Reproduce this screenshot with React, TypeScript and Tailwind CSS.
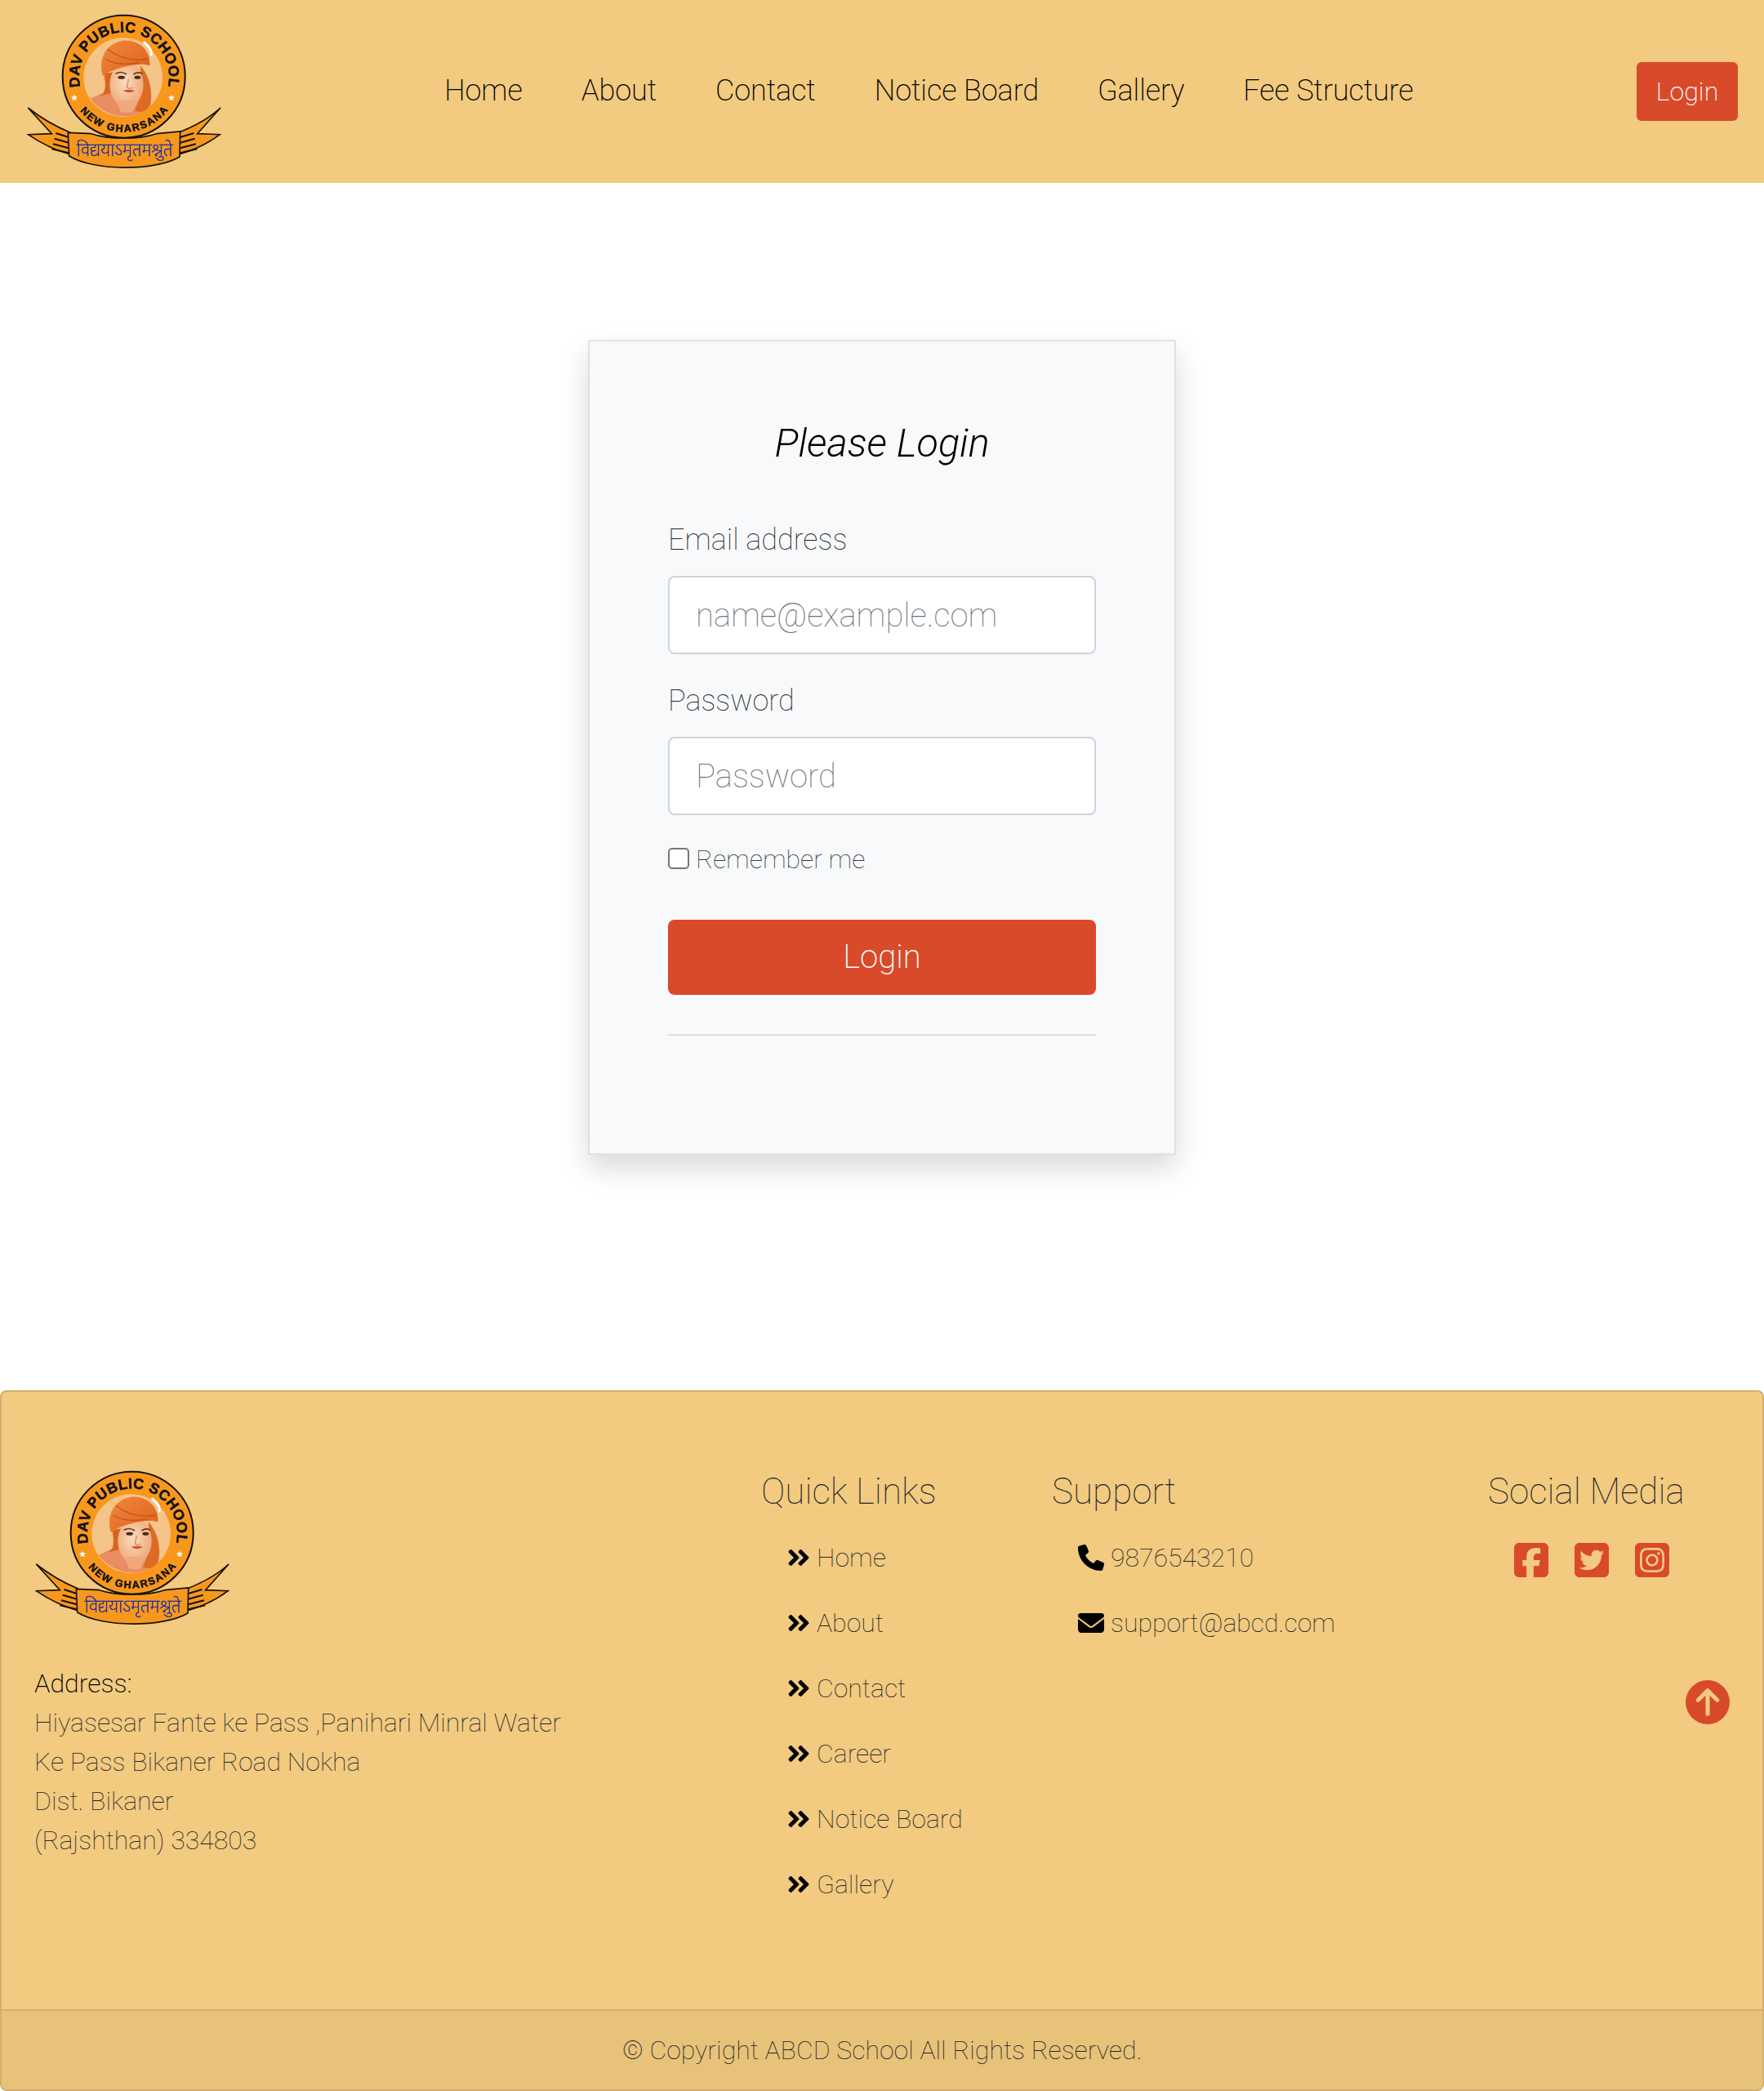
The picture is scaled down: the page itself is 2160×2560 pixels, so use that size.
import React from "react"
import { FaAngleDoubleRight } from "react-icons/fa"
import {
  FaCircleArrowUp,
  FaEnvelope,
  FaPhone,
  FaSquareFacebook,
  FaSquareInstagram,
  FaSquareTwitter,
} from "react-icons/fa6"

const navLinks = ["Home", "About", "Contact", "Notice Board", "Gallery", "Fee Structure"]
const quickLinks = ["Home", "About", "Contact", "Career", "Notice Board", "Gallery"]

const Logo = ({ id }: { id: string }) => (
  <svg viewBox="99 50 714 570" className="h-[190px] w-[238px] shrink-0 blur-[0.4px]">
    <defs>
      <path id={`${id}-top`} d="M295 318 A165 165 0 1 1 617 318" />
      <path id={`${id}-bottom`} d="M290 400 A204 204 0 0 0 620 400" />
      <linearGradient id={`${id}-turban`} x1="0" y1="0" x2="1" y2="1">
        <stop offset="0" stopColor="#f08a3c" />
        <stop offset="1" stopColor="#dd5f1c" />
      </linearGradient>
      <radialGradient id={`${id}-skin`} cx="0.45" cy="0.45" r="0.6">
        <stop offset="0" stopColor="#fbdcbc" />
        <stop offset="1" stopColor="#eda679" />
      </radialGradient>
    </defs>
    <g stroke="#161208" strokeWidth="5" fill="#f7981d">
      <path d="M103 395 C150 432 200 462 255 484 L255 565 C200 550 150 525 103 493 L190 490 Z" />
      <path d="M810 395 C770 432 715 462 660 484 L660 565 C715 550 765 525 808 493 L725 490 Z" />
      <circle cx="455" cy="280" r="225" strokeWidth="6" />
      <path d="M205 488 L252 503 M200 508 L252 523 M195 528 L252 543 M190 546 L252 561" fill="none" strokeWidth="6" />
      <path d="M662 503 L712 488 M662 523 L716 508 M662 543 L720 528 M662 561 L724 546" fill="none" strokeWidth="6" />
      <path d="M250 486 L335 490 C400 512 510 512 575 490 L662 482 L660 575 C570 628 345 628 254 572 Z" />
    </g>
    <circle cx="452" cy="283" r="145" fill="#f4c488" />
    <path d="M332 362 C365 345 392 335 410 322 L520 370 L552 382 C530 412 490 428 450 426 C405 424 362 400 332 362 Z" fill="#ea8d62" />
    <path d="M515 240 C552 280 562 340 552 385 C535 410 515 415 495 405 C520 360 520 300 515 240 Z" fill="#dd6a25" />
    <path d="M382 270 C392 325 385 345 365 352 L410 340 L425 262 Z" fill="#d9641f" />
    <ellipse cx="465" cy="310" rx="62" ry="82" fill={`url(#${id}-skin)`} />
    <path d="M425 368 L508 368 L485 412 L445 412 Z" fill="#f0a97c" />
    <path d="M378 278 C360 220 385 160 450 148 C505 142 555 180 550 240 C525 228 470 240 430 252 C405 262 392 268 378 278 Z" fill={`url(#${id}-turban)`} />
    <path d="M395 180 C440 215 490 225 545 215 M385 215 C430 240 470 235 510 230" stroke="#c9541a" strokeWidth="4" fill="none" />
    <path d="M425 270 Q445 258 465 272 M490 272 Q508 260 524 270" stroke="#6b3a1c" strokeWidth="5" fill="none" />
    <ellipse cx="446" cy="283" rx="13" ry="6" fill="#4a2a18" />
    <ellipse cx="505" cy="283" rx="12" ry="6" fill="#4a2a18" />
    <path d="M472 290 L466 320 Q476 328 488 320" stroke="#c98a64" strokeWidth="4" fill="none" />
    <path d="M452 331 Q474 325 495 331 Q474 346 452 331 Z" fill="#d9503c" />
    <path d="M530 155 Q560 180 556 200" stroke="#fff" strokeWidth="9" fill="none" strokeLinecap="round" />
    <g fill="#111" stroke="#111" strokeWidth="1.500" fontFamily="'Liberation Sans', sans-serif" fontWeight="700">
      <text fontSize="54">
        <textPath href={`#${id}-top`} textLength="590" lengthAdjust="spacing">
          DAV PUBLIC SCHOOL
        </textPath>
      </text>
      <text fontSize="38">
        <textPath href={`#${id}-bottom`} textLength="372" startOffset="2%" lengthAdjust="spacing">
          NEW GHARSANA
        </textPath>
      </text>
    </g>
    <path d="M273 346 l3.5 8 8.5 1 -6.500 5.500 2 8.500 -7.500 -4.500 -7.500 4.500 2 -8.500 -6.500 -5.500 8.500 -1 Z" fill="#fff" />
    <path d="M630 346 l3.5 8 8.5 1 -6.500 5.500 2 8.500 -7.500 -4.500 -7.500 4.500 2 -8.500 -6.500 -5.500 8.500 -1 Z" fill="#fff" />
    <text x="458" y="572" textAnchor="middle" fontSize="68" fill="#1f2fa8" stroke="#1f2fa8" strokeWidth="2" fontFamily="'Noto Sans', sans-serif">
      विद्ययाऽमृतमश्नुते
    </text>
  </svg>
)

const Field = ({ label, placeholder, type }: { label: string; placeholder: string; type: string }) => (
  <div>
    <label className="block text-[36px] leading-[54px] text-[#212529]">{label}</label>
    <input
      type={type}
      placeholder={placeholder}
      className="mt-[17px] block h-[96px] w-full rounded-[8px] border-2 border-[#ced4da] bg-white px-[32px] text-[40px] font-thin placeholder:text-[#6c757d]"
    />
  </div>
)

export default function App() {
  return (
    <div className="flex min-h-[2560px] flex-col bg-white font-[Roboto,sans-serif] font-thin text-[#212529]">
      <header className="flex h-[224px] items-center justify-between bg-[#f2ca80] pl-[33px] pr-[32px]">
        <Logo id="head" />
        <nav className="-mt-[2px] flex gap-[72px] text-[36px] font-extralight tracking-[-0.1px] text-black">
          {navLinks.map(link => (
            <a key={link} href="#">
              {link}
            </a>
          ))}
        </nav>
        <button className="h-[72px] w-[124px] rounded-[6px] bg-[#d94a2a] text-[32px] font-extralight text-white">
          Login
        </button>
      </header>

      <main className="h-[1478px] pt-[192px]">
        <div className="mx-auto h-[998px] w-[720px] border-2 border-[#dee2e6] bg-[#f8f9fa] px-[96px] pt-[96px] shadow-[0_16px_32px_rgba(0,0,0,0.15)]">
          <h1 className="text-center text-[48.6px] font-light italic leading-[58px] text-black">Please Login</h1>
          <div className="mt-[62px]">
            <Field label="Email address" placeholder="name@example.com" type="email" />
          </div>
          <div className="mt-[30px]">
            <Field label="Password" placeholder="Password" type="password" />
          </div>
          <label className="mt-[30px] flex h-[48px] items-center gap-[8px] text-[32px] text-[#343a40]">
            <input type="checkbox" className="-mt-[3px] h-[26px] w-[26px] appearance-none rounded-[5px] border-[2.5px] border-[#767676] bg-white" />
            Remember me
          </label>
          <button className="mt-[50px] h-[92px] w-full rounded-[8px] bg-[#d94a2a] text-[40px] font-extralight text-white">
            Login
          </button>
          <hr className="mt-[48px] border-t-2 border-[#dfdfdf]" />
        </div>
      </main>

      <footer className="relative overflow-hidden rounded-[8px] border-2 border-[#d4ae6e] bg-[#f2ca80]">
        <div className="flex h-[756px] pt-[96px]">
          <div className="w-[930px] shrink-0 pl-[41px]">
            <Logo id="foot" />
            <div className="-ml-[1px] mt-[47px] text-[32px] leading-[48px]">
              <div className="font-extralight text-black">Address:</div>
              <div>Hiyasesar Fante ke Pass ,Panihari Minral Water</div>
              <div>Ke Pass Bikaner Road Nokha</div>
              <div>Dist. Bikaner</div>
              <div>(Rajshthan) 334803</div>
            </div>
          </div>
          <div className="w-[356px] shrink-0">
            <h3 className="text-[44px] leading-[52px]">Quick Links</h3>
            <ul className="mt-[15px] pl-[32px]">
              {quickLinks.map(link => (
                <li key={link} className="flex h-[80px] items-center gap-[7px] text-[32px]">
                  <FaAngleDoubleRight className="-ml-[1px] h-[32px] w-[30px] text-black" />
                  {link}
                </li>
              ))}
            </ul>
          </div>
          <div className="w-[534px] shrink-0">
            <h3 className="text-[44px] leading-[52px]">Support</h3>
            <ul className="mt-[15px] pl-[32px]">
              <li className="flex h-[80px] items-center gap-[8px] text-[32px]">
                <FaPhone className="h-[32px] w-[32px] text-black" />
                9876543210
              </li>
              <li className="flex h-[80px] items-center gap-[8px] text-[32px]">
                <FaEnvelope className="h-[32px] w-[32px] text-black" />
                support@abcd.com
              </li>
            </ul>
          </div>
          <div>
            <h3 className="text-[44px] leading-[52px]">Social Media</h3>
            <div className="mt-[34px] flex gap-[26px] pl-[29px] text-[#d94a2a]">
              <FaSquareFacebook className="h-[48px] w-[48px]" />
              <FaSquareTwitter className="h-[48px] w-[48px]" />
              <FaSquareInstagram className="h-[48px] w-[48px]" />
            </div>
          </div>
        </div>
        <FaCircleArrowUp className="absolute right-[40px] top-[353px] h-[54px] w-[54px] text-[#d94a2a]" />
        <div className="flex h-[98px] items-center justify-center border-t-2 border-[#d4ae6e] bg-[#e8c279] text-[32px]">
          © Copyright ABCD School All Rights Reserved.
        </div>
      </footer>
    </div>
  )
}
